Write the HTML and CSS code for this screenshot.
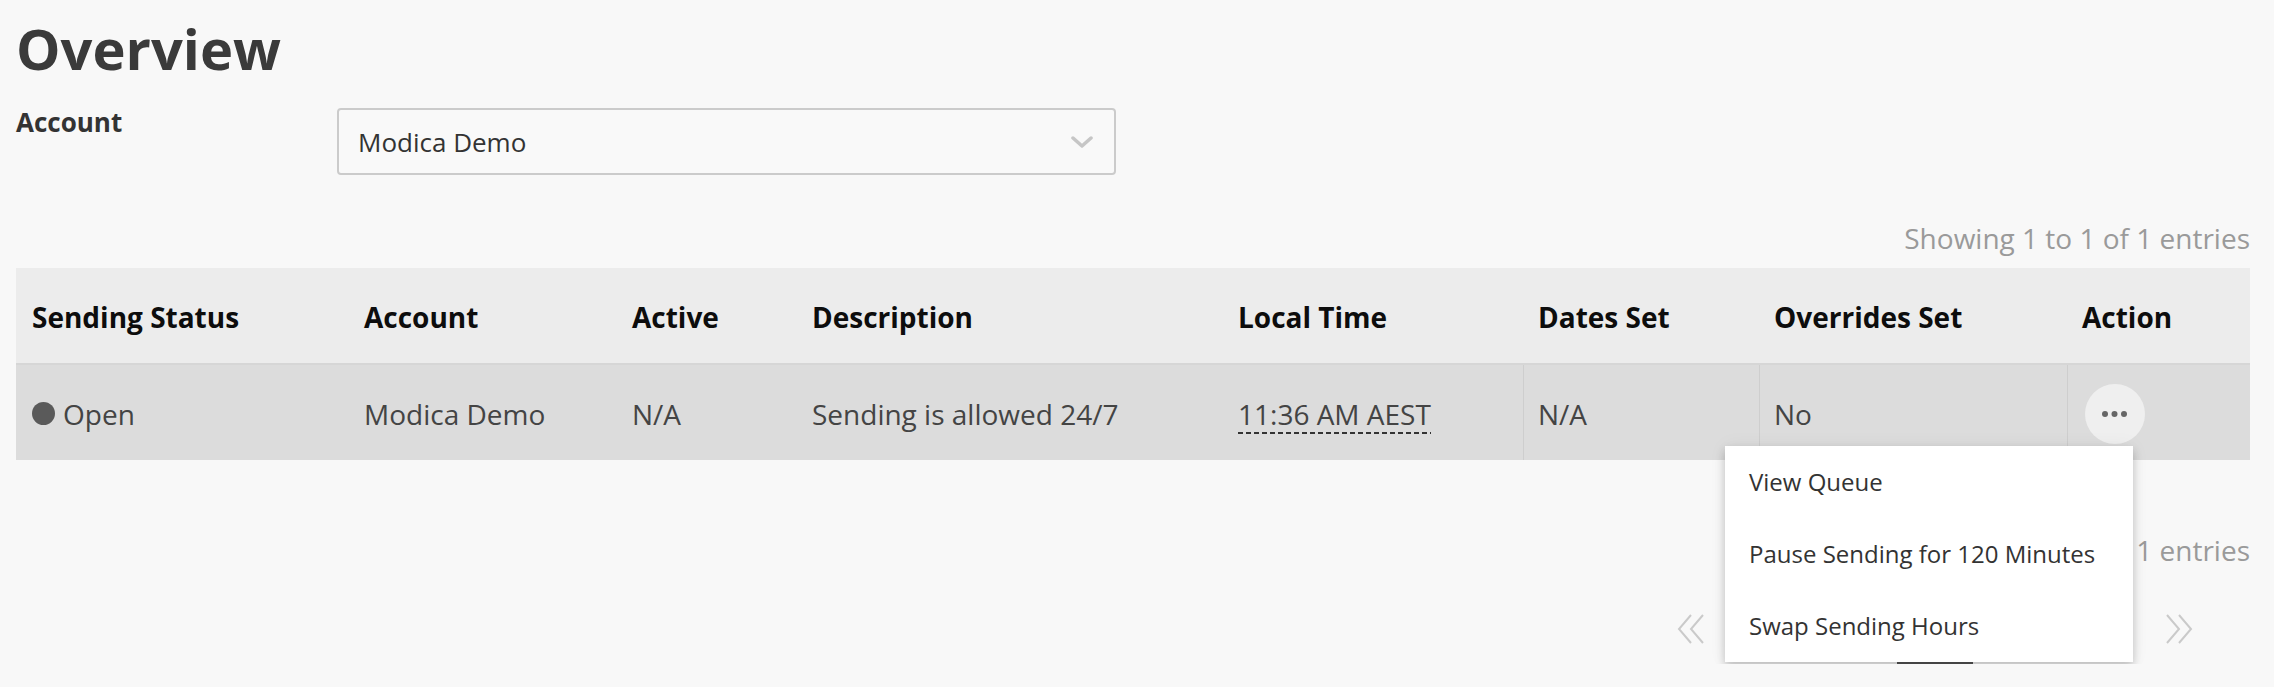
FILE: index.html
```html
<!DOCTYPE html>
<html lang="en">
<head>
<meta charset="utf-8">
<title>Overview</title>
<link rel="stylesheet" href="styles.css">
</head>
<body>
<div class="page">
  <h1 class="title">Overview</h1>
  <div class="field">
    <div class="field-label">Account</div>
    <div class="select">
      <span>Modica Demo</span>
      <svg class="chev" width="22" height="12" viewBox="0 0 22 12"><polyline points="2,2 11,10 20,2" fill="none" stroke="#c6c6c6" stroke-width="3.5" stroke-linecap="round" stroke-linejoin="round"/></svg>
    </div>
  </div>
  <div class="info">Showing 1 to 1 of 1 entries</div>
  <table class="grid">
    <colgroup>
      <col style="width:333px"><col style="width:268px"><col style="width:180px"><col style="width:426px">
      <col style="width:300px"><col style="width:236px"><col style="width:308px"><col style="width:183px">
    </colgroup>
    <thead>
      <tr>
        <th>Sending Status</th>
        <th>Account</th>
        <th>Active</th>
        <th>Description</th>
        <th>Local Time</th>
        <th>Dates Set</th>
        <th>Overrides Set</th>
        <th>Action</th>
      </tr>
    </thead>
    <tbody>
      <tr>
        <td><span class="dot"></span>Open</td>
        <td>Modica Demo</td>
        <td>N/A</td>
        <td>Sending is allowed 24/7</td>
        <td><span class="time">11:36 AM AEST</span></td>
        <td class="sep">N/A</td>
        <td class="sep">No</td>
        <td class="sep">
          <div class="action-wrap">
            <div class="more">
              <svg width="26" height="6" viewBox="0 0 26 6"><circle cx="3" cy="3" r="3" fill="#666"/><circle cx="12.5" cy="3" r="3" fill="#666"/><circle cx="22" cy="3" r="3" fill="#666"/></svg>
            </div>
            <ul class="menu">
              <li>View Queue</li>
              <li>Pause Sending for 120 Minutes</li>
              <li>Swap Sending Hours</li>
            </ul>
          </div>
        </td>
      </tr>
    </tbody>
  </table>
  <div class="info bottom">Showing 1 to 1 of 1 entries</div>
  <div class="pager">
    <span class="pg-nav"><svg width="28" height="30" viewBox="0 0 28 30"><polyline points="14,1 2,15 14,29" fill="none" stroke="#cacaca" stroke-width="2"/><polyline points="26,1 14,15 26,29" fill="none" stroke="#cacaca" stroke-width="2"/></svg></span>
    <span class="pg-nav"><svg width="28" height="30" viewBox="0 0 28 30"><polyline points="20,1 8,15 20,29" fill="none" stroke="#cacaca" stroke-width="2"/></svg></span>
    <span class="pg-num">1</span>
    <span class="pg-nav"><svg width="28" height="30" viewBox="0 0 28 30"><polyline points="8,1 20,15 8,29" fill="none" stroke="#cacaca" stroke-width="2"/></svg></span>
    <span class="pg-nav"><svg width="28" height="30" viewBox="0 0 28 30"><polyline points="2,1 14,15 2,29" fill="none" stroke="#cacaca" stroke-width="2"/><polyline points="14,1 26,15 14,29" fill="none" stroke="#cacaca" stroke-width="2"/></svg></span>
  </div>
</div>
</body>
</html>
```

FILE: styles.css
```css
html, body {
  margin: 0;
  padding: 0;
}
body {
  background: #f8f8f8;
  font-family: "Open Sans", "Liberation Sans", sans-serif;
  color: #333;
}
.page {
  padding: 0 24px 0 16px;
}
.title {
  margin: 14px 0 0;
  font-size: 56px;
  line-height: 68px;
  font-weight: 700;
  color: #3a3a3a;
}
.field {
  display: flex;
  align-items: flex-start;
  margin-top: 23px;
}
.field-label {
  width: 321px;
  font-size: 26px;
  line-height: 34px;
  font-weight: 700;
  color: #333;
}
.select {
  margin-top: 3px;
  width: 779px;
  height: 67px;
  box-sizing: border-box;
  border: 2px solid #cbcbcb;
  border-radius: 4px;
  background: #f9f9f9;
  display: flex;
  align-items: center;
  justify-content: space-between;
  padding: 0 21px 0 19px;
  font-size: 26px;
  color: #333;
}
.chev {
  display: block;
}
.info {
  margin-top: 43px;
  text-align: right;
  font-size: 28px;
  line-height: 40px;
  color: #9a9a9a;
}
.info.bottom {
  margin-top: 70px;
}
.grid {
  margin-top: 10px;
  width: 100%;
  table-layout: fixed;
  border-collapse: separate;
  border-spacing: 0;
  font-size: 28px;
  line-height: 40px;
}
.grid th {
  height: 97px;
  box-sizing: border-box;
  padding: 2px 15px 0;
  text-align: left;
  vertical-align: middle;
  font-weight: 700;
  color: #0d0d0d;
  background: #ececec;
  border-bottom: 2px solid #d6d6d6;
  white-space: nowrap;
}
.grid td {
  height: 95px;
  box-sizing: border-box;
  padding: 3px 15px 0;
  vertical-align: middle;
  color: #444;
  background: #dcdcdc;
  white-space: nowrap;
}
.grid th:first-child,
.grid td:first-child {
  padding-left: 16px;
}
.grid td.sep {
  border-left: 1px solid #cecece;
  padding-left: 14px;
}
.dot {
  display: inline-block;
  width: 23px;
  height: 23px;
  border-radius: 50%;
  background: #5a5a5a;
  margin-right: 8px;
}
.time {
  padding-bottom: 1px;
  background: repeating-linear-gradient(to right, #333 0 5px, transparent 5px 8px) left bottom / 100% 2px no-repeat;
}
.action-wrap {
  position: relative;
  width: 60px;
  height: 60px;
  margin-left: 3px;
}
.more {
  width: 60px;
  height: 60px;
  border-radius: 50%;
  background: #efefef;
  display: flex;
  align-items: center;
  justify-content: center;
}
.more svg {
  display: block;
}
.menu {
  position: absolute;
  top: 62px;
  left: -360px;
  width: 408px;
  margin: 0;
  padding: 0;
  list-style: none;
  background: #fff;
  box-shadow: 0 5px 9px rgba(0, 0, 0, 0.22), 0 0 18px rgba(0, 0, 0, 0.05);
  z-index: 10;
}
.menu li {
  height: 72px;
  line-height: 72px;
  padding: 0 24px;
  font-size: 24px;
  color: #333;
  white-space: nowrap;
}
.pager {
  margin-top: 23px;
  margin-right: 57px;
  display: flex;
  justify-content: flex-end;
  align-items: center;
  gap: 82px;
}
.pg-nav {
  width: 28px;
  height: 30px;
}
.pg-nav svg {
  display: block;
}
.pg-num {
  width: 76px;
  height: 71px;
  box-sizing: border-box;
  border-bottom: 2px solid #555;
  display: flex;
  align-items: center;
  justify-content: center;
  font-size: 28px;
  color: #333;
}
```
